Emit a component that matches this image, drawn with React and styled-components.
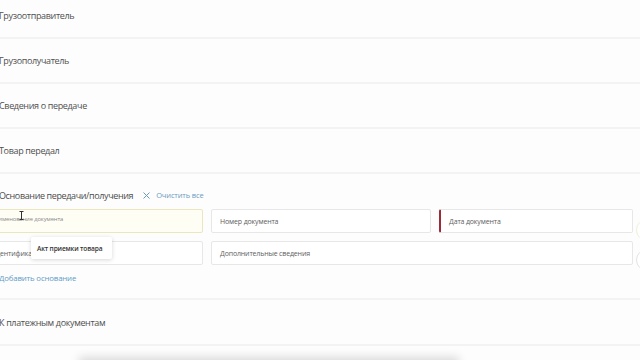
import React from 'react'
import styled, { createGlobalStyle } from 'styled-components'

const GlobalStyle = createGlobalStyle`
  html, body {
    margin: 0;
    background: #fdfdfd;
    overflow: hidden;
    font-family: "Open Sans", "Noto Sans", sans-serif;
  }
`

const Page = styled.div`
  position: relative;
  width: 680px;
  height: 360px;
  margin-left: -1px;
  overflow: hidden;
`

const Content = styled.div`
  margin-top: -6px;
`

const Section = styled.div`
  height: ${p => p.$h || 43}px;
  display: flex;
  align-items: center;
  border-bottom: 2px solid #f3f3f3;
  font-size: 9px;
  letter-spacing: -0.35px;
  color: #505050;
`

const Basis = styled.div`
  padding: 11px 0 14px;
  border-bottom: 2px solid #f3f3f3;
`

const Header = styled.div`
  height: 20px;
  display: flex;
  align-items: center;
  font-size: 9px;
  letter-spacing: -0.38px;
  color: #4c4c4c;
`

const ClearBtn = styled.span`
  display: flex;
  align-items: center;
  gap: 6px;
  margin-left: 10px;
  font-size: 7.5px;
  letter-spacing: -0.15px;
  color: #6b9cc0;
`

const Grid = styled.div`
  margin: 4px 0 0 -17px;
  display: grid;
  grid-template-columns: 221px 220px 194px 20px;
  grid-auto-rows: 24px;
  column-gap: 8px;
  row-gap: 8px;
`

const Field = styled.div`
  position: relative;
  box-sizing: border-box;
  grid-column: ${p => p.$span || 'auto'};
  display: flex;
  align-items: ${p => (p.$label ? 'flex-start' : 'center')};
  padding: ${p => (p.$label ? '5px 8px 0' : '0 8px')};
  border: 1px solid ${p => (p.$focus ? '#ece6bd' : '#e7e7e7')};
  border-left: ${p => (p.$error ? '2px solid #9c2b3a' : `1px solid ${p.$focus ? '#ece6bd' : '#e7e7e7'}`)};
  background: ${p => (p.$focus ? '#fffef4' : '#fff')};
  border-radius: 2px;
  font-size: ${p => (p.$label ? '5.8px' : '7px')};
  letter-spacing: ${p => (p.$label ? '-0.1px' : '-0.15px')};
  color: ${p => (p.$label ? '#888' : '#606060')};
  white-space: nowrap;
`

const Round = styled.div`
  width: 22px;
  height: 22px;
  box-sizing: border-box;
  border-radius: 50%;
  border: 1px solid ${p => (p.$faint ? '#f1eed8' : '#e3e3e3')};
  background: #fff;
  margin-left: -5px;
  align-self: ${p => (p.$faint ? 'end' : 'center')};
  margin-top: ${p => (p.$faint ? '0' : '14px')};
  margin-bottom: ${p => (p.$faint ? '-8px' : '0')};
`

const Menu = styled.div`
  position: absolute;
  left: 48px;
  top: -5px;
  width: 81px;
  height: 22px;
  box-sizing: border-box;
  padding-left: 6px;
  display: flex;
  align-items: center;
  background: #fff;
  border-radius: 2px;
  box-shadow: 0 1px 4px rgba(0, 0, 0, 0.16);
  font-size: 6.6px;
  letter-spacing: -0.15px;
  font-weight: 600;
  color: #333;
`

const Cursor = styled.svg`
  position: absolute;
  left: 36px;
  top: 1px;
`

const AddLink = styled.div`
  margin-top: 7px;
  line-height: 12px;
  font-size: 7.8px;
  letter-spacing: -0.15px;
  color: #5d9cc6;
`

const Footer = styled.div`
  position: absolute;
  left: 80px;
  bottom: -14px;
  width: 380px;
  height: 14px;
  background: #fff;
  box-shadow: 0 -3px 10px rgba(0, 0, 0, 0.14);
`

const sections = ['Грузоотправитель', 'Грузополучатель', 'Сведения о передаче', 'Товар передал']

export default function App () {
  return (
    <Page>
      <GlobalStyle />
      <Content>
        {sections.map(title => (
          <Section key={title}>{title}</Section>
        ))}
        <Basis>
          <Header>
            Основание передачи/получения
            <ClearBtn>
              <svg width='7' height='7' viewBox='0 0 7 7'>
                <path d='M0.5 0.5L6.5 6.5M6.5 0.5L0.5 6.5' stroke='#6b9cc0' strokeWidth='1' />
              </svg>
              Очистить все
            </ClearBtn>
          </Header>
          <Grid>
            <Field $focus $label>
              Наименование документа
              <Cursor width='5' height='9' viewBox='0 0 5 9'>
                <path d='M0.5 0.5H4.5M2.5 0.5V8.5M0.5 8.5H4.5' stroke='#333' strokeWidth='1' fill='none' />
              </Cursor>
            </Field>
            <Field>Номер документа</Field>
            <Field $error>Дата документа</Field>
            <Round $faint />
            <Field>
              Идентификатор
              <Menu>Акт приемки товара</Menu>
            </Field>
            <Field $span='span 2'>Дополнительные сведения</Field>
            <Round />
          </Grid>
          <AddLink>Добавить основание</AddLink>
        </Basis>
        <Section $h={44}>К платежным документам</Section>
      </Content>
      <Footer />
    </Page>
  )
}
